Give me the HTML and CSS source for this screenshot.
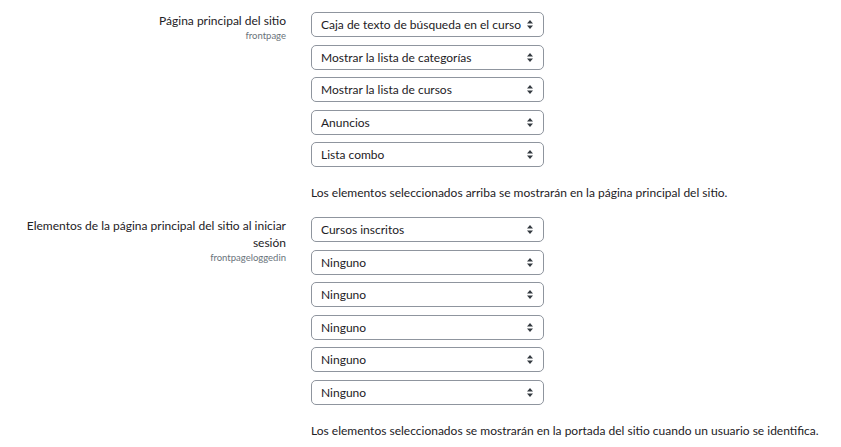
FILE: index.html
```html
<!DOCTYPE html>
<html lang="es">
<head>
<meta charset="utf-8">
<title>Página principal</title>
<link rel="stylesheet" href="styles.css">
</head>
<body>
<div class="form">
  <div class="row">
    <div class="label">
      <div class="title">Página principal del sitio</div>
      <div class="key">frontpage</div>
    </div>
    <div class="field">
      <div class="selects">
        <div class="select"><span>Caja de texto de búsqueda en el curso</span><svg class="arrow" width="6" height="9" viewBox="0 0 6 9"><path d="M3 0L6 3.5H0Z M3 9L0 5.5H6Z" fill="#343a40"/></svg></div>
        <div class="select"><span>Mostrar la lista de categorías</span><svg class="arrow" width="6" height="9" viewBox="0 0 6 9"><path d="M3 0L6 3.5H0Z M3 9L0 5.5H6Z" fill="#343a40"/></svg></div>
        <div class="select"><span>Mostrar la lista de cursos</span><svg class="arrow" width="6" height="9" viewBox="0 0 6 9"><path d="M3 0L6 3.5H0Z M3 9L0 5.5H6Z" fill="#343a40"/></svg></div>
        <div class="select"><span>Anuncios</span><svg class="arrow" width="6" height="9" viewBox="0 0 6 9"><path d="M3 0L6 3.5H0Z M3 9L0 5.5H6Z" fill="#343a40"/></svg></div>
        <div class="select"><span>Lista combo</span><svg class="arrow" width="6" height="9" viewBox="0 0 6 9"><path d="M3 0L6 3.5H0Z M3 9L0 5.5H6Z" fill="#343a40"/></svg></div>
      </div>
      <p class="desc">Los elementos seleccionados arriba se mostrarán en la página principal del sitio.</p>
    </div>
  </div>
  <div class="row">
    <div class="label">
      <div class="title">Elementos de la página principal del sitio al iniciar sesión</div>
      <div class="key">frontpageloggedin</div>
    </div>
    <div class="field">
      <div class="selects">
        <div class="select"><span>Cursos inscritos</span><svg class="arrow" width="6" height="9" viewBox="0 0 6 9"><path d="M3 0L6 3.5H0Z M3 9L0 5.5H6Z" fill="#343a40"/></svg></div>
        <div class="select"><span>Ninguno</span><svg class="arrow" width="6" height="9" viewBox="0 0 6 9"><path d="M3 0L6 3.5H0Z M3 9L0 5.5H6Z" fill="#343a40"/></svg></div>
        <div class="select"><span>Ninguno</span><svg class="arrow" width="6" height="9" viewBox="0 0 6 9"><path d="M3 0L6 3.5H0Z M3 9L0 5.5H6Z" fill="#343a40"/></svg></div>
        <div class="select"><span>Ninguno</span><svg class="arrow" width="6" height="9" viewBox="0 0 6 9"><path d="M3 0L6 3.5H0Z M3 9L0 5.5H6Z" fill="#343a40"/></svg></div>
        <div class="select"><span>Ninguno</span><svg class="arrow" width="6" height="9" viewBox="0 0 6 9"><path d="M3 0L6 3.5H0Z M3 9L0 5.5H6Z" fill="#343a40"/></svg></div>
        <div class="select"><span>Ninguno</span><svg class="arrow" width="6" height="9" viewBox="0 0 6 9"><path d="M3 0L6 3.5H0Z M3 9L0 5.5H6Z" fill="#343a40"/></svg></div>
      </div>
      <p class="desc">Los elementos seleccionados se mostrarán en la portada del sitio cuando un usuario se identifica.</p>
    </div>
  </div>
</div>
</body>
</html>
```

FILE: styles.css
```css
html, body {
  margin: 0;
  padding: 0;
  background: #ffffff;
}
body {
  font-family: "Segoe UI", Lato, "Noto Sans", sans-serif;
  font-size: 12px;
  color: #1d2125;
}
.form {
  padding-top: 12px;
}
.row {
  display: grid;
  grid-template-columns: 286px 1fr;
  column-gap: 25px;
}
.label {
  text-align: right;
  line-height: 17px;
  padding-left: 20px;
}
.key {
  font-size: 9.5px;
  line-height: 13px;
  color: #6a737b;
}
.selects {
  display: flex;
  flex-direction: column;
  gap: 7.5px;
  width: 233px;
}
.select {
  box-sizing: border-box;
  height: 25px;
  border: 1px solid #8f959e;
  border-radius: 5px;
  display: flex;
  align-items: center;
  justify-content: space-between;
  padding: 0 10px 0 9px;
  white-space: nowrap;
}
.arrow {
  flex: none;
}
.desc {
  margin: 17px 0 16px;
  line-height: 17px;
  white-space: nowrap;
}
```
